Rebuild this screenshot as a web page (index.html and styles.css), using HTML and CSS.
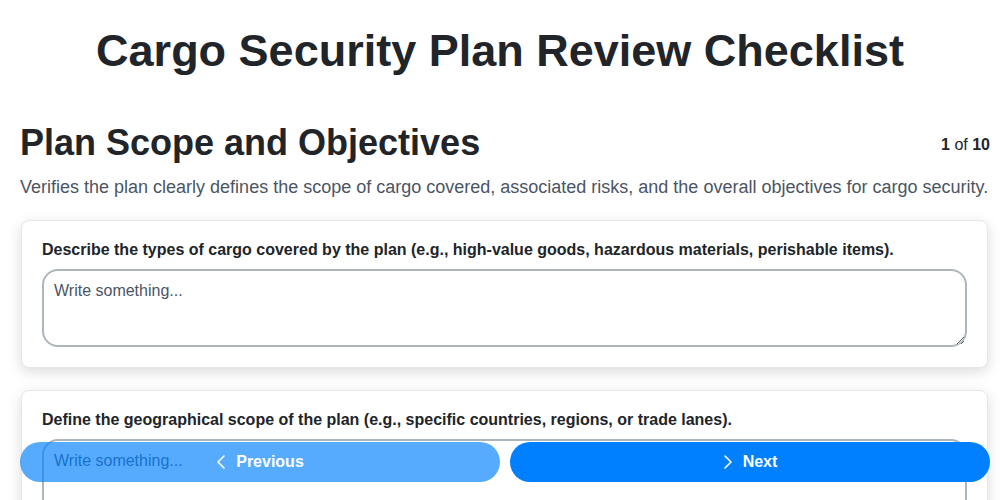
FILE: index.html
```html
<!DOCTYPE html>
<html lang="en">
<head>
<meta charset="utf-8">
<title>Cargo Security Plan Review Checklist</title>
<link rel="stylesheet" href="styles.css">
</head>
<body>
<h1 class="title">Cargo Security Plan Review Checklist</h1>
<div class="page">
  <div class="section-head">
    <h2 class="section-title">Plan Scope and Objectives</h2>
    <div class="counter"><b>1</b> of <b>10</b></div>
  </div>
  <p class="section-desc">Verifies the plan clearly defines the scope of cargo covered, associated risks, and the overall objectives for cargo security.</p>
  <div class="card">
    <label class="q-label">Describe the types of cargo covered by the plan (e.g., high-value goods, hazardous materials, perishable items).</label>
    <textarea class="q-input" placeholder="Write something..."></textarea>
  </div>
  <div class="card">
    <label class="q-label">Define the geographical scope of the plan (e.g., specific countries, regions, or trade lanes).</label>
    <textarea class="q-input" placeholder="Write something..."></textarea>
  </div>
</div>
<div class="nav">
  <button class="btn btn-prev"><svg width="10" height="16" viewBox="0 0 10 16"><polyline points="8,2 2,8 8,14" fill="none" stroke="#fff" stroke-width="1.6" stroke-linecap="round" stroke-linejoin="round"/></svg>Previous</button>
  <button class="btn btn-next"><svg width="10" height="16" viewBox="0 0 10 16"><polyline points="2,2 8,8 2,14" fill="none" stroke="#fff" stroke-width="1.6" stroke-linecap="round" stroke-linejoin="round"/></svg>Next</button>
</div>
</body>
</html>
```
FILE: styles.css
```css
* { box-sizing: border-box; }
body {
  margin: 0;
  font-family: "Liberation Sans", Arial, sans-serif;
  color: #212529;
  background: #fff;
}
.title {
  margin: 0;
  padding-top: 26px;
  height: 104px;
  text-align: center;
  font-size: 45px;
  font-weight: 700;
  line-height: 50px;
}
.page {
  padding: 0 10px 0 20px;
}
.section-head {
  display: flex;
  justify-content: space-between;
  align-items: flex-start;
}
.section-title {
  margin: 0;
  font-size: 36px;
  font-weight: 700;
  line-height: 40px;
  padding-top: 19px;
}
.counter {
  font-size: 16px;
  padding-top: 32px;
  color: #212529;
}
.section-desc {
  margin: 13px 0 0;
  font-size: 18px;
  line-height: 22px;
  color: #4b5563;
}
.card {
  margin: 22px 0 0 1px;
  padding: 20px;
  border: 1px solid #e5e7eb;
  border-radius: 8px;
  background: #fff;
  box-shadow: 0 4px 14px rgba(0,0,0,0.14);
  width: 967px;
}
.q-label {
  display: block;
  font-size: 16px;
  font-weight: 700;
  line-height: 18px;
}
.q-input {
  display: block;
  width: 100%;
  height: 78px;
  margin-top: 10px;
  padding: 10px 10px;
  border: 2px solid #adb5bd;
  border-radius: 16px;
  font-family: "Liberation Sans", Arial, sans-serif;
  font-size: 16px;
  line-height: 19px;
  color: #212529;
  resize: vertical;
}
.q-input::placeholder { color: #4b5563; opacity: 1; }
.nav {
  position: fixed;
  left: 20px;
  right: 10px;
  bottom: 18px;
  display: flex;
  gap: 10px;
}
.btn {
  flex: 1;
  height: 40px;
  border: 0;
  border-radius: 20px;
  background: #0080ff;
  color: #fff;
  font-family: "Liberation Sans", Arial, sans-serif;
  font-size: 16px;
  font-weight: 700;
  display: flex;
  align-items: center;
  justify-content: center;
  gap: 10px;
}
.btn-prev { opacity: 0.66; }
```
